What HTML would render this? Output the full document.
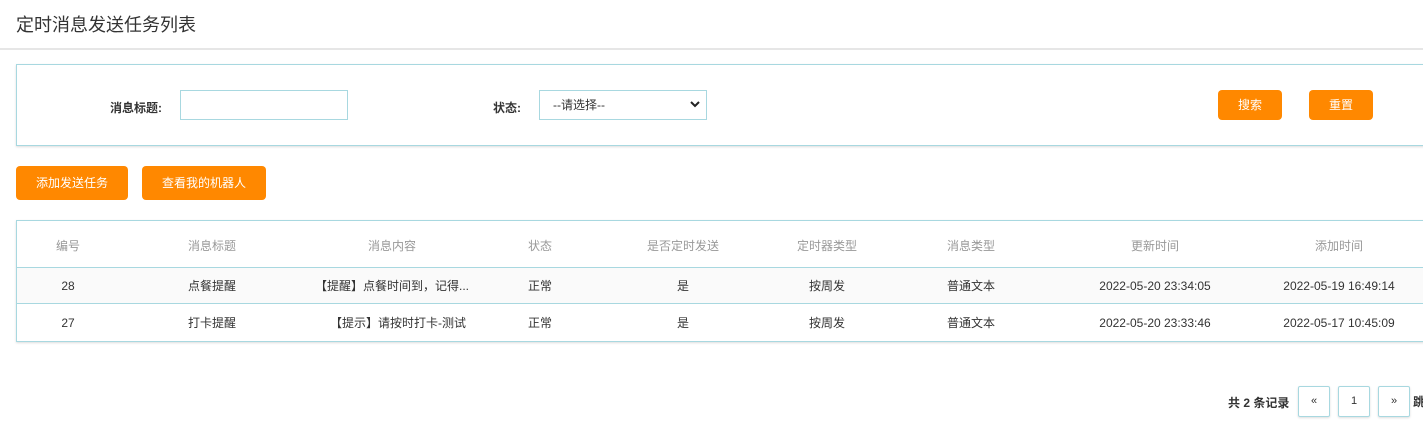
<!DOCTYPE html>
<html><head><meta charset="utf-8"><style>
*{margin:0;padding:0;box-sizing:border-box}
body{width:1423px;height:426px;overflow:hidden;background:#fff;font-family:"Liberation Sans","Noto Sans CJK SC",sans-serif;font-size:12px;color:#333;position:relative}
.a{position:absolute}
.btn{position:absolute;background:#ff8800;color:#fff;border-radius:4px;text-align:center;font-size:12px}
.c{position:absolute;transform:translateX(-50%);white-space:nowrap}
.z{margin-top:-2px}
.hd{color:#999}
.pg{position:absolute;top:386px;width:32px;height:31px;border:1px solid #a8d8e0;border-radius:2px;text-align:center;line-height:29px;font-size:11px;box-shadow:0 1px 2px #ddd}
</style></head><body>
<div class="a" style="left:16px;top:11px;font-size:18px;color:#333">定时消息发送任务列表</div>
<div class="a" style="left:0;top:48px;width:1423px;height:2px;background:#e6e6e6"></div>
<div class="a" style="left:16px;top:64px;width:1420px;height:82px;border:1px solid #a8d8e0;box-shadow:0 1px 2px #ddd"></div>
<div class="a" style="left:110px;top:99px;font-weight:bold">消息标题:</div>
<div class="a" style="left:180px;top:90px;width:168px;height:30px;border:1px solid #a8d8e0"></div>
<div class="a" style="left:493px;top:99px;font-weight:bold">状态:</div>
<div class="a" style="left:539px;top:90px;width:168px;height:30px;border:1px solid #a8d8e0"></div>
<div class="a" style="left:553px;top:96px">--请选择--</div>
<svg class="a" style="left:690px;top:100px" width="10" height="8"><path d="M1 2l4 4 4-4" stroke="#222" stroke-width="2" fill="none"/></svg>
<div class="btn" style="left:1218px;top:90px;width:64px;height:30px;line-height:30px">搜索</div>
<div class="btn" style="left:1309px;top:90px;width:64px;height:30px;line-height:30px">重置</div>
<div class="btn" style="left:16px;top:166px;width:112px;height:34px;line-height:34px">添加发送任务</div>
<div class="btn" style="left:142px;top:166px;width:124px;height:34px;line-height:34px">查看我的机器人</div>
<div class="a" style="left:16px;top:220px;width:1420px;height:122px;border:1px solid #a8d8e0;box-shadow:0 1px 2px #ddd"></div>
<div class="a" style="left:17px;top:267px;width:1410px;height:37px;background:#fafafa;border-top:1px solid #a8d8e0;border-bottom:1px solid #a8d8e0"></div>
<div class="c hd" style="left:68px;top:237px">编号</div>
<div class="c hd" style="left:212px;top:237px">消息标题</div>
<div class="c hd" style="left:392px;top:237px">消息内容</div>
<div class="c hd" style="left:540px;top:237px">状态</div>
<div class="c hd" style="left:683px;top:237px">是否定时发送</div>
<div class="c hd" style="left:827px;top:237px">定时器类型</div>
<div class="c hd" style="left:971px;top:237px">消息类型</div>
<div class="c hd" style="left:1155px;top:237px">更新时间</div>
<div class="c hd" style="left:1339px;top:237px">添加时间</div>
<div class="c" style="left:68px;top:279px">28</div>
<div class="c z" style="left:212px;top:279px">点餐提醒</div>
<div class="c z" style="left:392px;top:279px">【提醒】点餐时间到，记得...</div>
<div class="c z" style="left:540px;top:279px">正常</div>
<div class="c z" style="left:683px;top:279px">是</div>
<div class="c z" style="left:827px;top:279px">按周发</div>
<div class="c z" style="left:971px;top:279px">普通文本</div>
<div class="c" style="left:1155px;top:279px">2022-05-20 23:34:05</div>
<div class="c" style="left:1339px;top:279px">2022-05-19 16:49:14</div>
<div class="c" style="left:68px;top:316px">27</div>
<div class="c z" style="left:212px;top:316px">打卡提醒</div>
<div class="c z" style="left:398px;top:316px">【提示】请按时打卡-测试</div>
<div class="c z" style="left:540px;top:316px">正常</div>
<div class="c z" style="left:683px;top:316px">是</div>
<div class="c z" style="left:827px;top:316px">按周发</div>
<div class="c z" style="left:971px;top:316px">普通文本</div>
<div class="c" style="left:1155px;top:316px">2022-05-20 23:33:46</div>
<div class="c" style="left:1339px;top:316px">2022-05-17 10:45:09</div>
<div class="a" style="left:1228px;top:394px;font-weight:bold">共 2 条记录</div>
<div class="pg" style="left:1298px">«</div>
<div class="pg" style="left:1338px">1</div>
<div class="pg" style="left:1378px">»</div>
<div class="a" style="left:1413px;top:393px;font-weight:bold">跳</div>
</body></html>
